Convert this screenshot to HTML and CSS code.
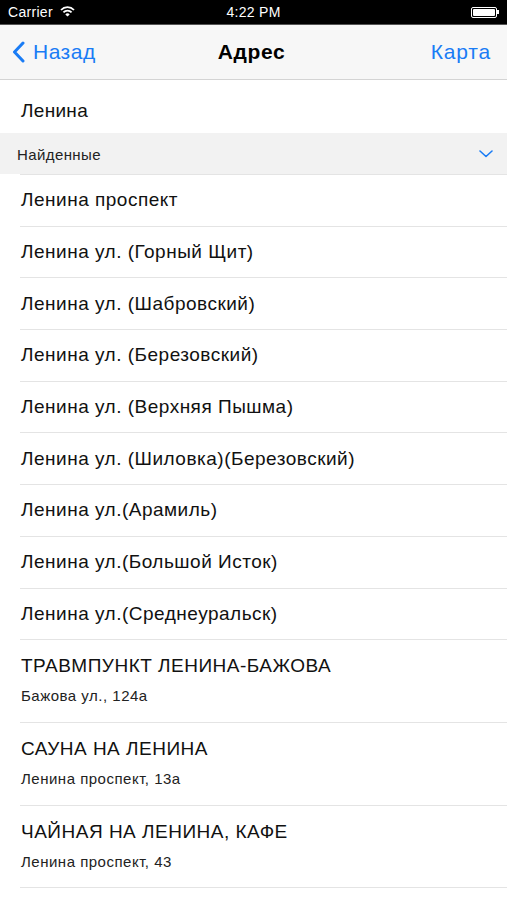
FILE: index.html
```html
<!DOCTYPE html>
<html lang="ru">
<head>
<meta charset="utf-8">
<link rel="stylesheet" href="styles.css">
</head>
<body>
<div class="screen">
  <div class="status">
    <div class="status-left">
      <span>Carrier</span>
      <svg class="wifi" width="15" height="11" viewBox="0 0 15 11">
        <path d="M1 4 A9 9 0 0 1 14 4" fill="none" stroke="#fff" stroke-width="1.8"/>
        <path d="M3.4 6.4 A5.6 5.6 0 0 1 11.6 6.4" fill="none" stroke="#fff" stroke-width="1.8"/>
        <path d="M7.5 10.5 L5.3 8.4 A3 3 0 0 1 9.7 8.4 Z" fill="#fff"/>
      </svg>
    </div>
    <div class="status-time">4:22 PM</div>
    <div class="status-right">
      <div class="battery"><div class="battery-fill"></div></div>
      <div class="battery-nub"></div>
    </div>
  </div>
  <div class="navbar">
    <div class="nav-back">
      <svg width="13" height="22" viewBox="0 0 13 22"><path d="M11 2 L2.5 11 L11 20" fill="none" stroke="#1a7cf5" stroke-width="3" stroke-linecap="round" stroke-linejoin="round"/></svg>
      <span>Назад</span>
    </div>
    <div class="nav-title">Адрес</div>
    <div class="nav-right">Карта</div>
  </div>
  <div class="search">Ленина</div>
  <div class="section">
    <span>Найденные</span>
    <svg width="14" height="8" viewBox="0 0 14 8"><path d="M1 1 L7 6.5 L13 1" fill="none" stroke="#1a7cf5" stroke-width="1.6" stroke-linecap="round" stroke-linejoin="round"/></svg>
  </div>
  <ul class="list">
    <li class="row"><span>Ленина проспект</span></li>
    <li class="row"><span>Ленина ул. (Горный Щит)</span></li>
    <li class="row"><span>Ленина ул. (Шабровский)</span></li>
    <li class="row"><span>Ленина ул. (Березовский)</span></li>
    <li class="row"><span>Ленина ул. (Верхняя Пышма)</span></li>
    <li class="row"><span>Ленина ул. (Шиловка)(Березовский)</span></li>
    <li class="row"><span>Ленина ул.(Арамиль)</span></li>
    <li class="row"><span>Ленина ул.(Большой Исток)</span></li>
    <li class="row"><span>Ленина ул.(Среднеуральск)</span></li>
    <li class="row2"><span class="t">ТРАВМПУНКТ ЛЕНИНА-БАЖОВА</span><span class="s">Бажова ул., 124а</span></li>
    <li class="row2"><span class="t">САУНА НА ЛЕНИНА</span><span class="s">Ленина проспект, 13а</span></li>
    <li class="row2"><span class="t">ЧАЙНАЯ НА ЛЕНИНА, КАФЕ</span><span class="s">Ленина проспект, 43</span></li>
  </ul>
</div>
</body>
</html>
```

FILE: styles.css
```css
* { box-sizing: border-box; }
html, body { margin: 0; padding: 0; background: #fff; }
body { font-family: "Liberation Sans", Arial, sans-serif; color: #111; }
.screen { width: 507px; height: 900px; overflow: hidden; background: #fff; }

.status {
  height: 25px;
  background: #000;
  color: #fff;
  display: flex;
  align-items: center;
  justify-content: space-between;
  padding: 0 8px 0 8px;
  font-size: 14px;
  border-bottom: 1px solid #555;
}
.status-left { display: flex; align-items: center; gap: 7px; width: 120px; letter-spacing: 0.3px; }
.wifi { margin-top: -1px; }
.status-time { font-size: 14px; letter-spacing: 0.3px; }
.status-right { display: flex; align-items: center; width: 120px; justify-content: flex-end; }
.battery { width: 26px; height: 11px; border: 1px solid #fff; border-radius: 2px; padding: 1px; }
.battery-fill { width: 100%; height: 100%; background: #fff; border-radius: 1px; }
.battery-nub { width: 2px; height: 4px; background: #fff; }

.navbar {
  height: 55px;
  background: #f7f7f7;
  border-bottom: 1px solid #d4d4d4;
  display: grid;
  grid-template-columns: 1fr auto 1fr;
  align-items: center;
  padding: 0 16px 0 12px;
}
.nav-back { display: flex; align-items: center; gap: 8px; color: #1a7cf5; font-size: 21px; letter-spacing: 0.5px; }
.nav-title { font-size: 21px; font-weight: bold; color: #000; letter-spacing: 0.6px; }
.nav-right { justify-self: end; color: #1a7cf5; font-size: 21px; letter-spacing: 0.8px; }

.search {
  height: 53px;
  display: flex;
  align-items: center;
  padding: 9px 0 0 21px;
  font-size: 19px;
  letter-spacing: 0.3px;
  color: #111;
}
.section {
  height: 41px;
  background: #f2f2f2;
  display: flex;
  align-items: center;
  justify-content: space-between;
  padding: 1px 14px 0 17px;
  font-size: 15px;
  letter-spacing: 0.4px;
  color: #222;
}

.list { list-style: none; margin: 0; padding: 0; }
.row, .row2 { margin-left: 20px; border-top: 1.5px solid #e4e4e4; }
.row {
  height: 51.7px;
  display: flex;
  align-items: center;
  font-size: 19px;
  letter-spacing: 0.5px;
  padding-left: 1px;
}
.row2 {
  height: 83px;
  display: flex;
  flex-direction: column;
  padding-left: 1px;
}
.row2 .t { font-size: 19px; letter-spacing: 0.5px; margin-top: 15px; }
.row2 .s { font-size: 15px; letter-spacing: 0.5px; margin-top: 10px; color: #222; }
.list li:last-child { border-bottom: 1.5px solid #e4e4e4; }
```
